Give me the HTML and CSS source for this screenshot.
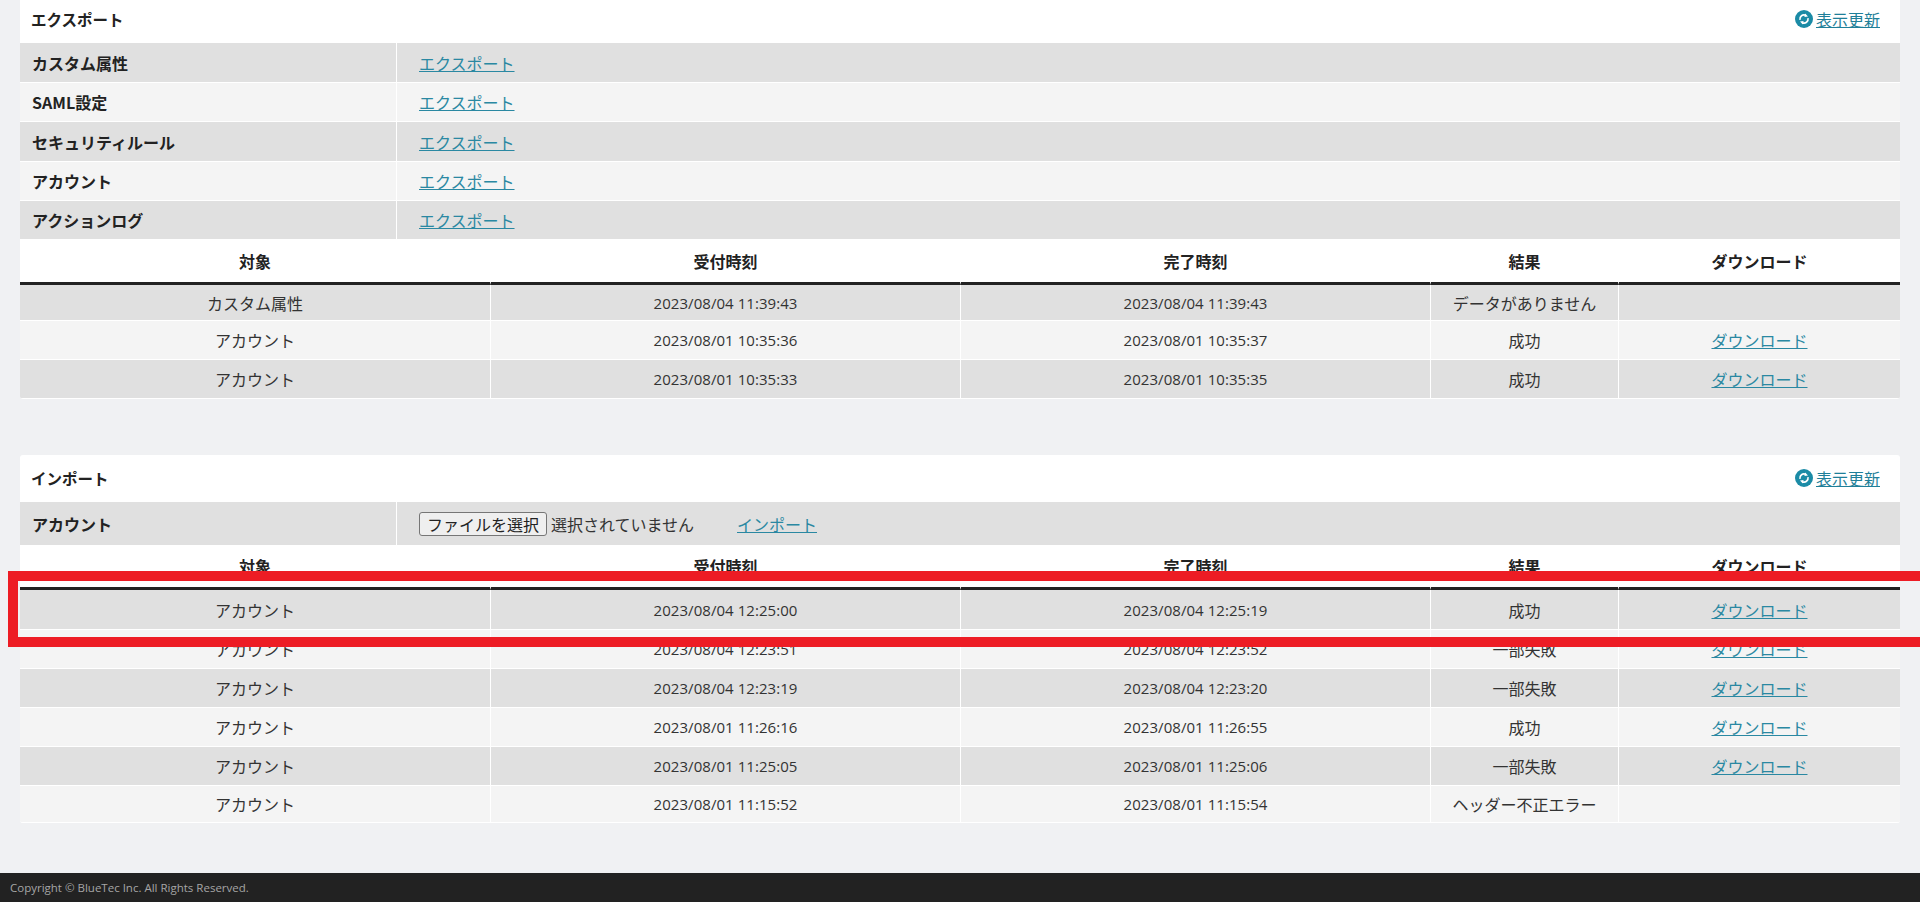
FILE: index.html
```html
<!DOCTYPE html>
<html lang="ja">
<head>
<meta charset="utf-8">
<title>エクスポート / インポート</title>
<link rel="stylesheet" href="styles.css">
</head>
<body>
<main class="content">
  <section class="panel panel-export">
    <header class="panel-head">
      <h2 class="panel-title">エクスポート</h2>
      <a class="refresh" href="#"><svg class="refresh-icon" viewBox="0 0 18 18"><circle cx="9" cy="9" r="9" fill="#1b8ba6"/><path d="M5 9.8A4.1 4.1 0 0 1 10.8 5.3M13 8.2A4.1 4.1 0 0 1 7.2 12.7" fill="none" stroke="#fff" stroke-width="1.6"/><path d="M10.2 3.4L13 6.4L9.4 7ZM7.8 14.6L5 11.6L8.6 11Z" fill="#fff"/></svg><span class="refresh-label">表示更新</span></a>
    </header>
    <table class="form-table form-export">
      <tr><th>カスタム属性</th><td><a class="link" href="#">エクスポート</a></td></tr>
      <tr><th>SAML設定</th><td><a class="link" href="#">エクスポート</a></td></tr>
      <tr><th>セキュリティルール</th><td><a class="link" href="#">エクスポート</a></td></tr>
      <tr><th>アカウント</th><td><a class="link" href="#">エクスポート</a></td></tr>
      <tr><th>アクションログ</th><td><a class="link" href="#">エクスポート</a></td></tr>
    </table>
    <table class="log-table">
      <thead><tr class="head-tall"><th class="c-target">対象</th><th class="c-time">受付時刻</th><th class="c-time">完了時刻</th><th class="c-result">結果</th><th class="c-dl">ダウンロード</th></tr></thead>
      <tbody>
        <tr class="row-plain"><td>カスタム属性</td><td class="dt">2023/08/04 11:39:43</td><td class="dt">2023/08/04 11:39:43</td><td>データがありません</td><td></td></tr>
        <tr><td>アカウント</td><td class="dt">2023/08/01 10:35:36</td><td class="dt">2023/08/01 10:35:37</td><td>成功</td><td><a class="link" href="#">ダウンロード</a></td></tr>
        <tr><td>アカウント</td><td class="dt">2023/08/01 10:35:33</td><td class="dt">2023/08/01 10:35:35</td><td>成功</td><td><a class="link" href="#">ダウンロード</a></td></tr>
      </tbody>
    </table>
  </section>

  <section class="panel panel-import">
    <header class="panel-head">
      <h2 class="panel-title">インポート</h2>
      <a class="refresh" href="#"><svg class="refresh-icon" viewBox="0 0 18 18"><circle cx="9" cy="9" r="9" fill="#1b8ba6"/><path d="M5 9.8A4.1 4.1 0 0 1 10.8 5.3M13 8.2A4.1 4.1 0 0 1 7.2 12.7" fill="none" stroke="#fff" stroke-width="1.6"/><path d="M10.2 3.4L13 6.4L9.4 7ZM7.8 14.6L5 11.6L8.6 11Z" fill="#fff"/></svg><span class="refresh-label">表示更新</span></a>
    </header>
    <table class="form-table form-import">
      <tr><th>アカウント</th><td><div class="file-row"><button class="file-button" type="button">ファイルを選択</button><span class="file-name">選択されていません</span><a class="link import-link" href="#">インポート</a></div></td></tr>
    </table>
    <table class="log-table">
      <thead><tr><th class="c-target">対象</th><th class="c-time">受付時刻</th><th class="c-time">完了時刻</th><th class="c-result">結果</th><th class="c-dl">ダウンロード</th></tr></thead>
      <tbody>
        <tr class="row-first"><td>アカウント</td><td class="dt">2023/08/04 12:25:00</td><td class="dt">2023/08/04 12:25:19</td><td>成功</td><td><a class="link" href="#">ダウンロード</a></td></tr>
        <tr><td>アカウント</td><td class="dt">2023/08/04 12:23:51</td><td class="dt">2023/08/04 12:23:52</td><td>一部失敗</td><td><a class="link" href="#">ダウンロード</a></td></tr>
        <tr><td>アカウント</td><td class="dt">2023/08/04 12:23:19</td><td class="dt">2023/08/04 12:23:20</td><td>一部失敗</td><td><a class="link" href="#">ダウンロード</a></td></tr>
        <tr><td>アカウント</td><td class="dt">2023/08/01 11:26:16</td><td class="dt">2023/08/01 11:26:55</td><td>成功</td><td><a class="link" href="#">ダウンロード</a></td></tr>
        <tr><td>アカウント</td><td class="dt">2023/08/01 11:25:05</td><td class="dt">2023/08/01 11:25:06</td><td>一部失敗</td><td><a class="link" href="#">ダウンロード</a></td></tr>
        <tr class="row-last"><td>アカウント</td><td class="dt">2023/08/01 11:15:52</td><td class="dt">2023/08/01 11:15:54</td><td>ヘッダー不正エラー</td><td></td></tr>
      </tbody>
    </table>
  </section>
</main>
<footer class="footer">Copyright © BlueTec Inc. All Rights Reserved.</footer>
<div class="annotation"></div>
</body>
</html>
```

FILE: styles.css
```css
* { box-sizing: border-box; }
html, body { height: 100%; }
body {
  margin: 0;
  height: 902px;
  overflow: hidden;
  position: relative;
  display: flex;
  flex-direction: column;
  background: #f0f1f3;
  color: #333;
  font-family: "Noto Sans CJK JP", "Open Sans", sans-serif;
  font-size: 16px;
}
.content { flex: 1; padding: 0 20px; margin-top: -4px; }
.panel { background: #fff; border-radius: 3px; overflow: hidden; }
.panel-import { margin-top: 56px; }
.panel-head {
  height: 47px;
  padding: 0 20px 2px 11px;
  display: flex;
  align-items: center;
  justify-content: space-between;
}
.panel-title { margin: 0; font-size: 15.5px; font-weight: 700; color: #222; }
.refresh { display: flex; align-items: center; gap: 3px; color: #1f7f99; }
.refresh-icon { width: 18px; height: 18px; display: block; }
.refresh-label { line-height: 20px; }
table { width: 100%; border-collapse: separate; border-spacing: 0; table-layout: fixed; }
.form-table tr:nth-child(odd) { background: #e0e0e0; }
.form-table tr:nth-child(even) { background: #f4f4f4; }
.form-table th, .form-table td { padding: 0; border-bottom: 1px solid #fff; line-height: 24px; }
.form-table th {
  width: 20%;
  padding-left: 12px;
  text-align: left;
  font-weight: 700;
  color: #222;
}
.form-table td { padding-left: 22px; border-left: 1px solid #fff; }
.form-export tr:nth-child(odd) { height: 40px; }
.form-export tr:nth-child(even) { height: 39px; }
.form-export tr:last-child { height: 38px; }
.form-export tr:last-child th, .form-export tr:last-child td { border-bottom: 0; }
.form-import tr { height: 43px; }
.form-import th, .form-import td { border-bottom: 0; }
.file-row { display: flex; align-items: center; }
.file-button {
  width: 128px;
  height: 24px;
  padding: 0;
  border: 1px solid #767676;
  border-radius: 3px;
  background: #efefef;
  color: #222;
  font: inherit;
  line-height: 20px;
}
.file-name { margin-left: 4px; width: 186px; }
.link { color: #2a88a2; }
.log-table th, .log-table td { text-align: center; padding: 0 4px; }
.log-table th {
  height: 45px;
  font-weight: 700;
  color: #222;
  border-bottom: 3px solid #222;
  border-left: 1px solid #fff;
}
.head-tall th { height: 46px; }
.log-table th:first-child { border-left: 0; }
.log-table td {
  height: 39px;
  border-bottom: 1px solid #fff;
  border-left: 1px solid #fff;
  line-height: 24px;
}
.log-table td:first-child { border-left: 0; }
.log-table tbody tr:nth-child(odd) { background: #e0e0e0; }
.log-table tbody tr:nth-child(even) { background: #f4f4f4; }
.log-table .row-plain td { height: 36px; }
.log-table .row-first td { height: 40px; }
.log-table .row-last td { height: 37px; }
.dt { font-family: "Open Sans", "Noto Sans CJK JP", sans-serif; font-size: 15px; letter-spacing: 0.05px; }
.c-target, .c-time { width: 25%; }
.c-result { width: 10%; }
.c-dl { width: 15%; }
.footer {
  height: 29px;
  padding-left: 10px;
  background: #222;
  color: #a5a5a5;
  font-family: "Open Sans", sans-serif;
  font-size: 11.5px;
  line-height: 29px;
}
.annotation {
  position: absolute;
  left: 8px;
  top: 571px;
  width: 1940px;
  height: 76px;
  border: 10px solid #ed1c24;
}
```
